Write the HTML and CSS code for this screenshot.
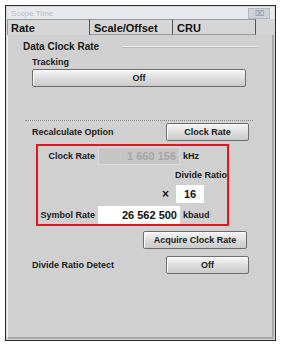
FILE: index.html
```html
<!DOCTYPE html>
<html lang="en">
  <head>
    <meta charset="UTF-8" />
    <title>Scope Time</title>
    <link rel="stylesheet" href="styles.css">
  </head>
  <body>
    <div class="window">
      <div class="titlebar">
        <span class="title">Scope Time</span>
        <span class="close">&#x2327;</span>
      </div>
      <div class="tabs">
        <div class="tab active">Rate</div>
        <div class="tab">Scale/Offset</div>
        <div class="tab">CRU</div>
      </div>
      <div class="panel">
        <div class="section-head">
          <span class="head-text">Data Clock Rate</span>
          <span class="head-line"></span>
        </div>

        <div class="content">
          <div class="label tracking">Tracking</div>
          <div class="btn wide">Off</div>

          <div class="separator"></div>

          <div class="row recalc">
            <span class="label">Recalculate Option</span>
            <div class="btn small">Clock Rate</div>
          </div>

          <div class="redbox">
            <div class="field clock">
              <span class="field-label">Clock Rate</span>
              <div class="input disabled">1 660 156</div>
              <span class="unit">kHz</span>
            </div>
            <div class="divide-label">Divide Ratio</div>
            <div class="field ratio">
              <span class="times">&times;</span>
              <div class="input ratio-input">16</div>
            </div>
            <div class="field symbol">
              <span class="field-label">Symbol Rate</span>
              <div class="input">26 562 500</div>
              <span class="unit">kbaud</span>
            </div>
          </div>

          <div class="btn acquire">Acquire Clock Rate</div>

          <div class="row detect">
            <span class="label">Divide Ratio Detect</span>
            <div class="btn small">Off</div>
          </div>
        </div>
      </div>
    </div>
  </body>
</html>
```

FILE: styles.css
```css
body {
  margin: 0;
  background: #fff;
  font-family: "Liberation Sans", Arial, sans-serif;
  font-weight: bold;
  font-size: 9px;
  color: #1a1a1a;
}

.window {
  margin: 5px 0 0 5px;
  width: 271px;
  height: 336px;
  box-sizing: border-box;
  border: 1px solid #2a2a2a;
  padding: 1px;
  background: #d8d8d8;
  display: flex;
  flex-direction: column;
}

.titlebar {
  height: 12px;
  background: #e6e9ee;
  display: flex;
  align-items: center;
  justify-content: space-between;
  padding: 0 4px 0 4px;
}

.title {
  font-weight: normal;
  font-size: 8px;
  color: #b9c1cc;
}

.close {
  width: 20px;
  height: 9px;
  background: #cdd2d9;
  border: 1px solid #b4bac3;
  font-size: 8px;
  line-height: 9px;
  text-align: center;
  color: #8d96a3;
  font-weight: normal;
}

.tabs {
  display: flex;
  height: 16px;
  background: #d4d4d4;
}

.tab {
  width: 83px;
  box-sizing: border-box;
  border-top: 1px solid #9a9a9a;
  border-right: 1px solid #555;
  border-bottom: 1px solid #9a9a9a;
  padding: 2px 0 0 4px;
  font-size: 11px;
  white-space: nowrap;
  color: #111;
  background: #d6d6d6;
}

.tab.active {
  border-bottom: none;
  border-left: 1px solid #9a9a9a;
  padding-left: 3px;
}

.panel {
  flex: 1;
  background: #d0d0d0;
  border-left: 1px solid #f0f0f0;
  border-right: 2px solid #a8a8a8;
  border-bottom: 2px solid #a8a8a8;
}

.section-head {
  display: flex;
  align-items: center;
  padding: 5px 0 0 15px;
  height: 13px;
}

.head-text {
  font-size: 10px;
  white-space: nowrap;
}

.head-line {
  margin-left: 23px;
  width: 135px;
  height: 1px;
  background: #ececec;
  border-bottom: 1px solid #b8b8b8;
}

.content {
  padding-left: 24px;
}

.label {
  display: block;
  white-space: nowrap;
}

.tracking {
  margin-top: 4px;
  height: 12px;
}

.btn {
  box-sizing: border-box;
  height: 18px;
  border: 1px solid #6d6d6d;
  border-radius: 2px;
  background: linear-gradient(#f6f6f6, #dcdcdc 55%, #cacaca);
  text-align: center;
  line-height: 16px;
  white-space: nowrap;
  box-shadow: inset 1px 1px 0 #fff;
}

.wide {
  width: 214px;
}

.separator {
  margin: 33px 0 0 -7px;
  width: 228px;
  height: 0;
  border-top: 1px dotted #8a8a8a;
}

.row {
  display: flex;
  align-items: center;
  justify-content: space-between;
  width: 217px;
}

.recalc {
  margin-top: 2px;
}

.small {
  width: 83px;
}

.redbox {
  margin: 3px 0 0 4px;
  width: 193px;
  height: 82px;
  box-sizing: border-box;
  border: 2px solid #e8141b;
  padding: 1px 0 0 0;
}

.field {
  display: flex;
  align-items: center;
  height: 18px;
}

.field-label {
  width: 60px;
  flex: none;
  text-align: right;
  padding-right: 3px;
  box-sizing: border-box;
  white-space: nowrap;
}

.input {
  box-sizing: border-box;
  width: 82px;
  height: 18px;
  background: #fff;
  text-align: right;
  padding-right: 3px;
  font-size: 11px;
  line-height: 18px;
  color: #111;
}

.input.disabled {
  background: #c6c6c6;
  border: 1px solid #dadada;
  color: #a5a5a5;
  line-height: 16px;
}

.unit {
  margin-left: 3px;
}

.divide-label {
  margin: 3px 0 0 137px;
  height: 14px;
  line-height: 14px;
  white-space: nowrap;
}

.ratio {
  margin-top: 3px;
  padding-left: 124px;
}

.times {
  width: 14px;
  font-size: 12px;
}

.ratio-input {
  width: 28px;
  text-align: center;
  padding: 0;
}

.symbol {
  margin-top: 3px;
}

.acquire {
  margin: 5px 0 0 111px;
  width: 104px;
}

.detect {
  margin-top: 7px;
}
```
